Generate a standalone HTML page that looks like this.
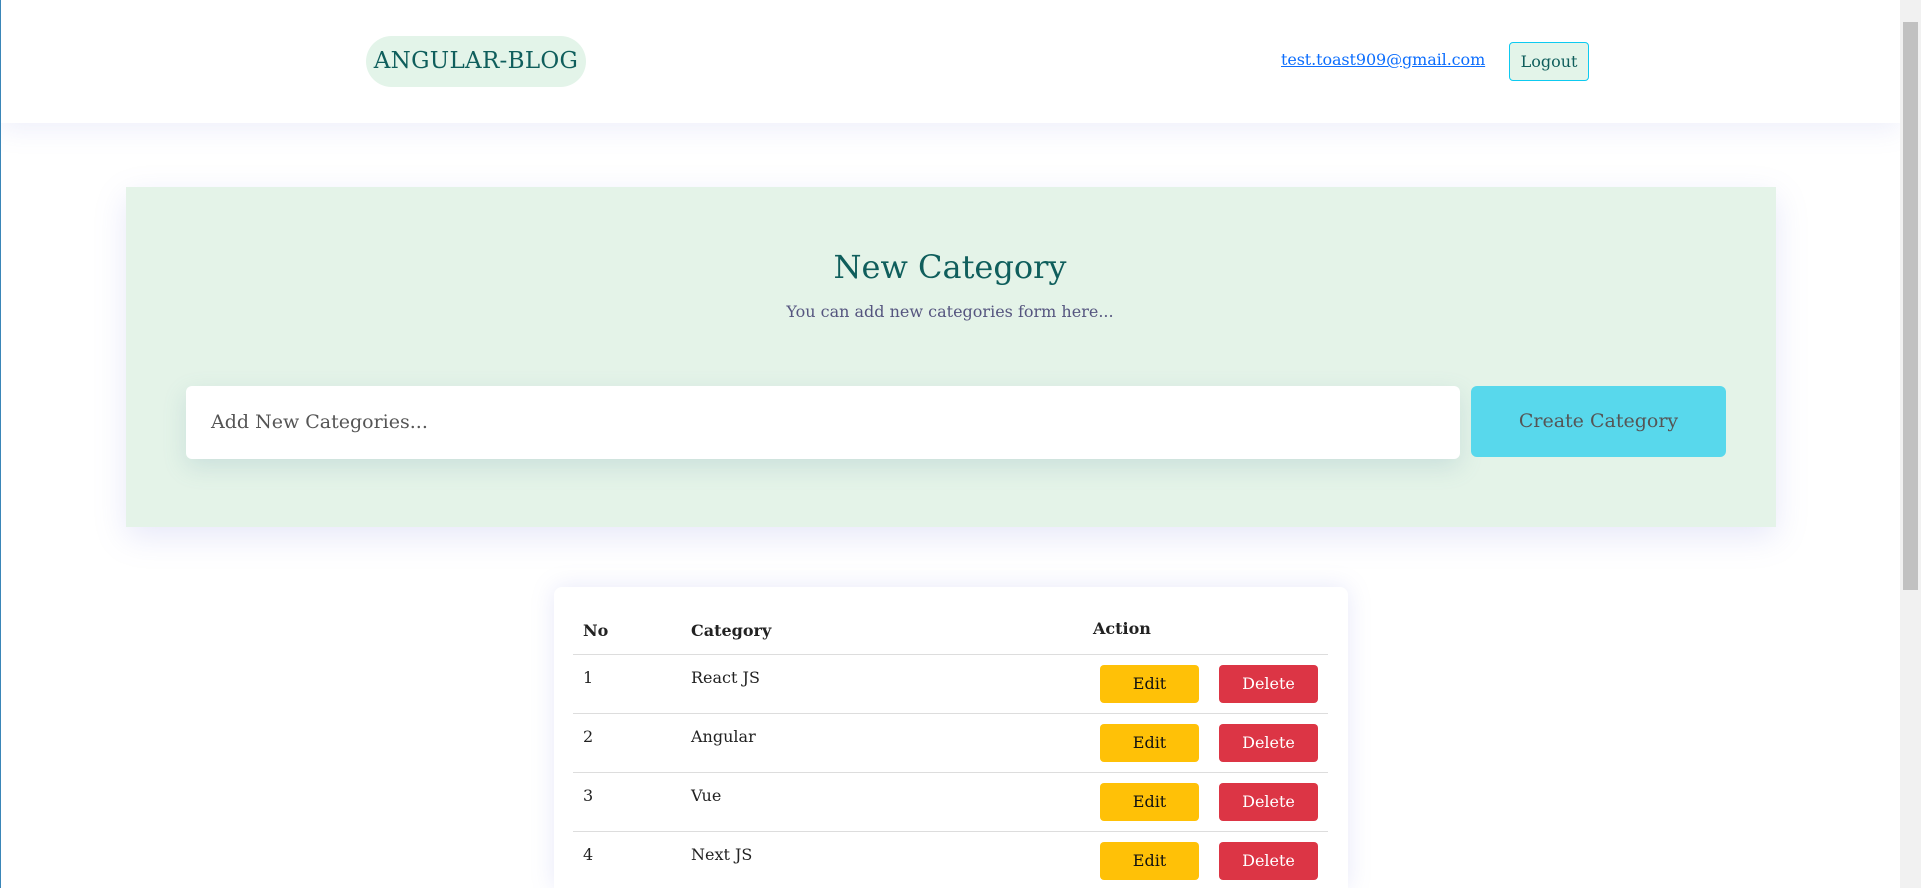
<!DOCTYPE html>
<html style="width:1921px;height:888px;overflow:hidden"><head><meta charset="utf-8"><style>
*{margin:0;padding:0;box-sizing:border-box}
body{width:1921px;height:888px;overflow:hidden;background:#fff;font-family:"DejaVu Serif","Liberation Serif",serif;position:relative}
.a{position:absolute}
.nav{left:0;top:0;width:1900px;height:123px;background:#fff;box-shadow:0 8px 24px rgba(120,130,220,.12)}
.logo{left:366px;top:36px;width:220px;height:51px;background:#e3f4e9;border-radius:26px;color:#0f5e5c;font-size:23px;text-align:center;line-height:51px;letter-spacing:.3px}
.email{left:1281px;top:50px;font-size:16px;color:#0d6efd;text-decoration:underline;white-space:nowrap;letter-spacing:-.1px}
.logout{left:1509px;top:42px;width:80px;height:39px;background:#e3f4e9;border:1px solid #0dcaf0;border-radius:4px;color:#0f5e5c;font-size:16px;text-align:center;line-height:37px}
.panel{left:126px;top:187px;width:1650px;height:340px;background:#e4f3e8;box-shadow:0 10px 30px rgba(120,130,220,.18)}
.title{left:0;top:248px;width:1900px;text-align:center;font-size:32px;color:#0f5e5c}
.sub{left:0;top:302px;width:1900px;text-align:center;font-size:16px;color:#55557f}
.inp{left:186px;top:386px;width:1274px;height:73px;background:#fff;border-radius:6px;box-shadow:0 8px 24px rgba(100,150,170,.2);font-size:19px;color:#555;padding-left:25px;line-height:73px}
.btn{left:1471px;top:386px;width:255px;height:71px;background:#58d8ec;border-radius:6px;font-size:19px;color:#555;text-align:center;line-height:71px}
.card{left:554px;top:587px;width:794px;height:301px;background:#fff;border-radius:8px 8px 0 0;box-shadow:0 0 24px rgba(120,130,220,.18)}
.t{font-size:16px;color:#222;white-space:nowrap}
.b{font-weight:bold}
.line{left:573px;width:755px;height:1px;background:#ddd}
.e{width:99px;height:38px;background:#ffc107;border-radius:4px;text-align:center;line-height:38px;font-size:16px;color:#111}
.d{width:99px;height:38px;background:#dc3545;border-radius:4px;text-align:center;line-height:38px;font-size:16px;color:#fff}
.sb{left:1900px;top:0;width:21px;height:888px;background:#f1f1f1}
.th{left:1903px;top:22px;width:15px;height:568px;background:#c1c1c1}
.lb{left:0;top:0;width:1px;height:888px;background:#3a86b8}
</style></head><body>
<div class="a nav"></div>
<div class="a lb"></div>
<div class="a logo">ANGULAR-BLOG</div>
<div class="a email">test.toast909@gmail.com</div>
<div class="a logout">Logout</div>
<div class="a panel"></div>
<div class="a title">New Category</div>
<div class="a sub">You can add new categories form here...</div>
<div class="a inp">Add New Categories...</div>
<div class="a btn">Create Category</div>
<div class="a card"></div>
<div class="a t b" style="left:583px;top:621px">No</div>
<div class="a t b" style="left:691px;top:621px">Category</div>
<div class="a t b" style="left:1093px;top:619px">Action</div>
<div class="a line" style="top:654px"></div>
<div class="a line" style="top:713px"></div>
<div class="a line" style="top:772px"></div>
<div class="a line" style="top:831px"></div>
<div class="a t" style="left:583px;top:668px">1</div><div class="a t" style="left:691px;top:668px">React JS</div>
<div class="a t" style="left:583px;top:727px">2</div><div class="a t" style="left:691px;top:727px">Angular</div>
<div class="a t" style="left:583px;top:786px">3</div><div class="a t" style="left:691px;top:786px">Vue</div>
<div class="a t" style="left:583px;top:845px">4</div><div class="a t" style="left:691px;top:845px">Next JS</div>
<div class="a e" style="left:1100px;top:665px">Edit</div><div class="a d" style="left:1219px;top:665px">Delete</div>
<div class="a e" style="left:1100px;top:724px">Edit</div><div class="a d" style="left:1219px;top:724px">Delete</div>
<div class="a e" style="left:1100px;top:783px">Edit</div><div class="a d" style="left:1219px;top:783px">Delete</div>
<div class="a e" style="left:1100px;top:842px">Edit</div><div class="a d" style="left:1219px;top:842px">Delete</div>
<div class="a sb"></div><div class="a th"></div>
</body></html>
